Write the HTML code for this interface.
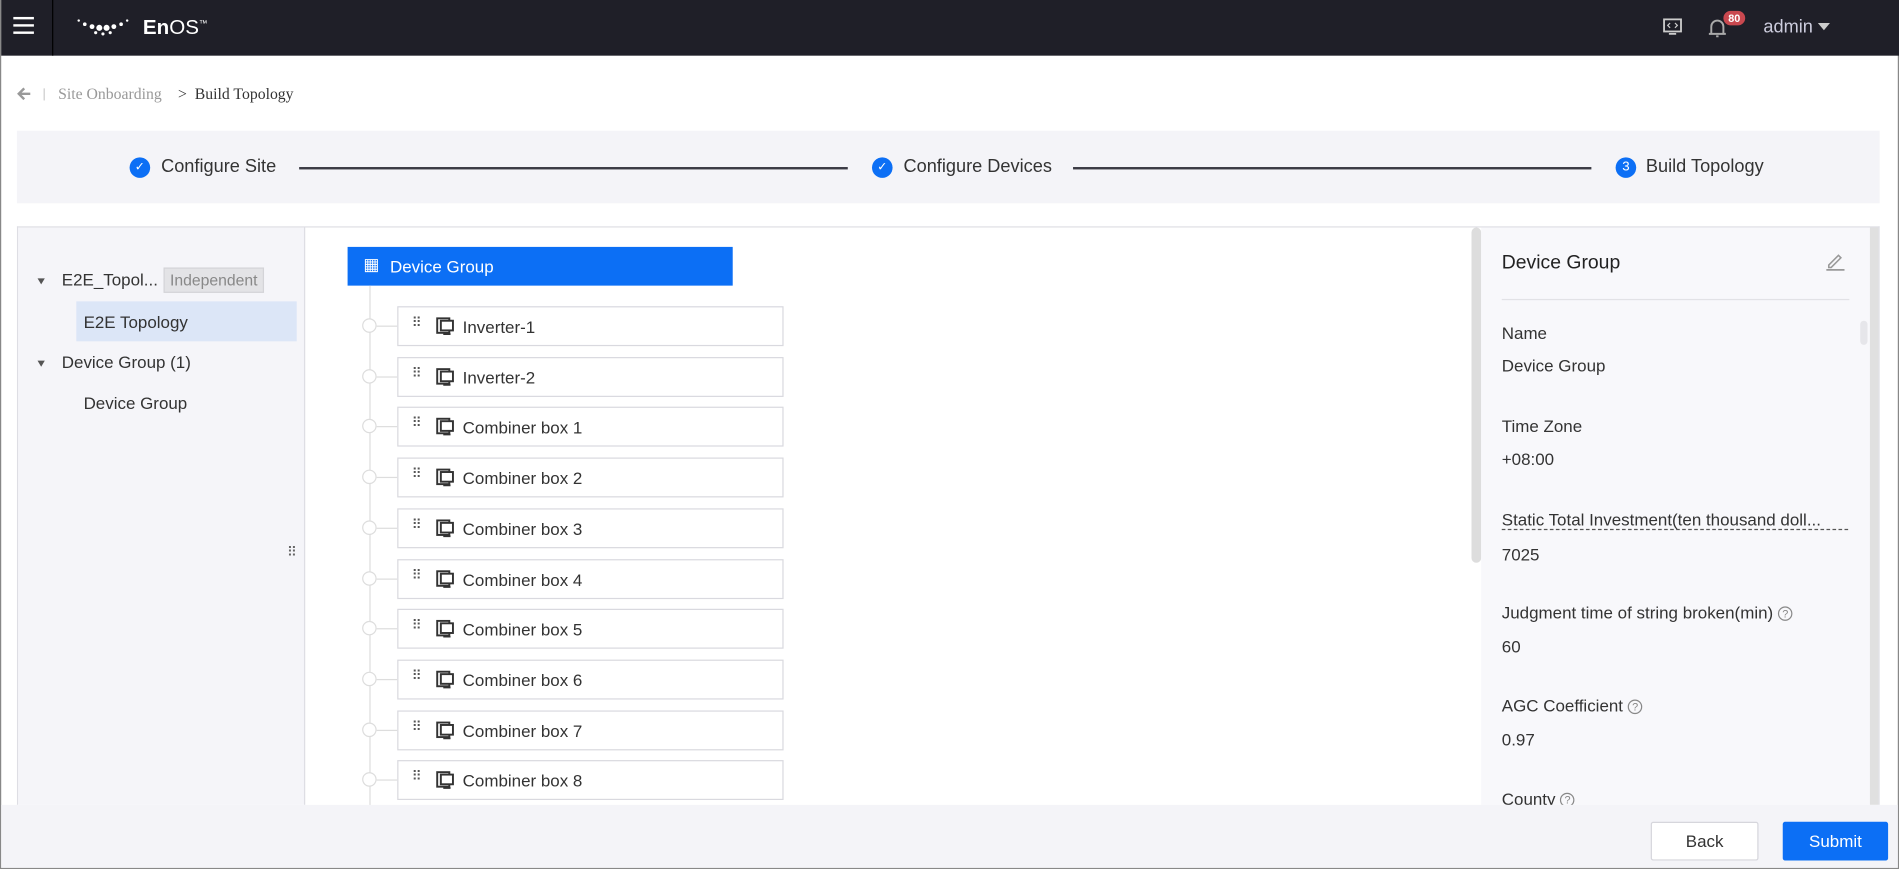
<!DOCTYPE html>
<html><head><meta charset="utf-8"><style>
*{box-sizing:border-box;margin:0;padding:0}
html,body{width:1899px;height:869px;overflow:hidden;background:#fff}
#w{position:absolute;left:0;top:0;width:1568px;height:718px;transform:scale(1.2111,1.2103);transform-origin:0 0;font-family:"Liberation Sans",sans-serif;color:#333;border-left:1px solid #888;border-right:1px solid #888;border-bottom:1px solid #888}
.a{position:absolute}
.top{left:0;top:0;width:1568px;height:46px;background:#1f1f28}
.t{position:absolute;white-space:nowrap}
.item{position:absolute;left:327px;width:319px;height:33px;border:1px solid #d9d9df;background:#fff;font-size:14px;color:#333}
.dot{position:absolute;left:298px;width:12px;height:12px;border:1px solid #ddd;border-radius:50%;background:#fff}
.hl{position:absolute;left:310px;width:17px;height:1px;background:#ddd}
.lbl{position:absolute;left:1239px;font-size:14px;color:#333}
.q{display:inline-block;width:12px;height:12px;border:1px solid #888;border-radius:50%;font-size:9px;line-height:10px;text-align:center;color:#888;vertical-align:1px;margin-left:4px}
</style></head><body><div id="w">
<div class="a top"></div>
<div class="a" style="left:42px;top:0;width:1px;height:46px;background:#000"></div>
<div class="a" style="left:10px;top:14px;width:17px;height:2px;background:#fff;box-shadow:0 6px 0 #fff,0 12px 0 #fff"></div>
<svg class="a" style="left:62px;top:14px" width="50" height="20"><g fill="#fff"><circle cx="2" cy="3" r="1"/><circle cx="7" cy="6" r="1.5"/><circle cx="13" cy="8" r="2"/><circle cx="19" cy="9" r="2.5"/><circle cx="25" cy="9" r="2.5"/><circle cx="31" cy="8" r="2"/><circle cx="37" cy="6" r="1.5"/><circle cx="42" cy="3" r="1"/><circle cx="16" cy="13" r="1.3"/><circle cx="22" cy="14" r="1.3"/><circle cx="28" cy="13" r="1.3"/></g></svg>
<div class="t" style="left:117px;top:13px;color:#fff;font-size:17px"><b>En</b>OS<sup style="font-size:7px">™</sup></div>
<svg class="a" style="left:1372px;top:15px" width="16" height="15"><rect x="1" y="1" width="14" height="10" fill="none" stroke="#ccc" stroke-width="1.5"/><path d="M5 13h6" stroke="#ccc" stroke-width="1.5"/><path d="M6 4l-2 2 2 2M10 4l2 2-2 2" stroke="#ccc" fill="none"/></svg>
<svg class="a" style="left:1408px;top:13px" width="18" height="20"><path d="M4 15V9a5 5 0 0110 0v6M2 15h14M8 17h2" stroke="#aaa" stroke-width="1.6" fill="none"/></svg>
<div class="t" style="left:1422px;top:9px;background:#c9484f;color:#fff;font-size:9px;font-weight:bold;border-radius:8px;padding:1px 4px">80</div>
<div class="t" style="left:1455px;top:14px;color:#ccd;font-size:15px">admin</div>
<div class="a" style="left:1500px;top:19px;border:5px solid transparent;border-top:6px solid #ccc"></div>
<svg class="a" style="left:13px;top:72px" width="12" height="11"><path d="M11 5.5H2M6 1L1.5 5.5 6 10" stroke="#999" stroke-width="2" fill="none"/></svg>
<div class="a" style="left:35px;top:73px;width:1px;height:10px;background:#ccc"></div>
<div class="t" style="left:47px;top:70px;font-family:'Liberation Serif',serif;font-size:13px;color:#999">Site Onboarding</div>
<div class="t" style="left:146px;top:70px;font-family:'Liberation Serif',serif;font-size:13px;color:#333">&gt;&nbsp;&nbsp;Build Topology</div>
<div class="a" style="left:13px;top:108px;width:1538px;height:60px;background:#f4f4f8"></div>
<div class="a" style="left:106px;top:130px;width:17px;height:17px;border-radius:50%;background:#0c6ff5;color:#fff;font-size:10px;text-align:center;line-height:17px">✓</div>
<div class="t" style="left:132px;top:129px;font-size:15px">Configure Site</div>
<div class="a" style="left:246px;top:138px;width:453px;height:2px;background:#3a3a44"></div>
<div class="a" style="left:719px;top:130px;width:17px;height:17px;border-radius:50%;background:#0c6ff5;color:#fff;font-size:10px;text-align:center;line-height:17px">✓</div>
<div class="t" style="left:745px;top:129px;font-size:15px">Configure Devices</div>
<div class="a" style="left:885px;top:138px;width:428px;height:2px;background:#3a3a44"></div>
<div class="a" style="left:1333px;top:130px;width:17px;height:17px;border-radius:50%;background:#0c6ff5;color:#fff;font-size:11px;text-align:center;line-height:17px">3</div>
<div class="t" style="left:1358px;top:129px;font-size:15px">Build Topology</div>
<div class="a" style="left:13px;top:187px;width:1538px;height:478px;border:1px solid #dedee4;border-bottom:0"></div>
<div class="a" style="left:14px;top:188px;width:237px;height:477px;background:#f5f5f9;border-right:1px solid #dedee4"></div>
<div class="a" style="left:30px;top:230px;border:3px solid transparent;border-top:5px solid #555"></div>
<div class="t" style="left:50px;top:223px;font-size:14px">E2E_Topol...</div>
<div class="t" style="left:134px;top:221px;width:83px;height:21px;background:#e3e3e6;border:1px solid #d4d4d8;color:#888;font-size:13px;text-align:center;line-height:19px">Independent</div>
<div class="a" style="left:62px;top:249px;width:182px;height:33px;background:#dce6f7"></div>
<div class="t" style="left:68px;top:258px;font-size:14px">E2E Topology</div>
<div class="a" style="left:30px;top:298px;border:3px solid transparent;border-top:5px solid #555"></div>
<div class="t" style="left:50px;top:291px;font-size:14px">Device Group (1)</div>
<div class="t" style="left:68px;top:325px;font-size:14px">Device Group</div>
<div class="t" style="left:236px;top:450px;font-size:11px;color:#666">⠿</div>
<div class="a" style="left:286px;top:204px;width:318px;height:32px;background:#0c6ff5"></div>
<div class="t" style="left:299px;top:210px;color:#fff;font-size:14px">▦</div>
<div class="t" style="left:321px;top:212px;color:#fff;font-size:14px">Device Group</div>
<div class="a" style="left:304px;top:236px;width:1px;height:430px;background:#ddd"></div>
<div id="items"></div>
<div class="a" style="left:1214px;top:188px;width:8px;height:277px;background:#ddd;border-radius:4px"></div>
<div class="a" style="left:1222px;top:188px;width:328px;height:477px;background:#f8f8fb"></div>
<div class="a" style="left:1543px;top:188px;width:7px;height:477px;background:#e0e0e0"></div>
<div class="a" style="left:1535px;top:265px;width:6px;height:20px;background:#e6e6ea;border-radius:3px"></div>
<div class="t" style="left:1239px;top:209px;font-size:16px;color:#222">Device Group</div>
<svg class="a" style="left:1505px;top:208px" width="18" height="16"><path d="M4 11L12 3l2 2-8 8H4z" fill="none" stroke="#999" stroke-width="1.3"/><path d="M2 15h15" stroke="#999" stroke-width="1.5"/></svg>
<div class="a" style="left:1239px;top:247px;width:287px;height:1px;background:#e2e2e6"></div>
<div class="lbl" style="top:267px">Name</div>
<div class="lbl" style="top:294px">Device Group</div>
<div class="lbl" style="top:344px">Time Zone</div>
<div class="lbl" style="top:371px">+08:00</div>
<div class="lbl" style="top:421px;border-bottom:1px dashed #555;width:286px">Static Total Investment(ten thousand doll...</div>
<div class="lbl" style="top:450px">7025</div>
<div class="lbl" style="top:498px">Judgment time of string broken(min)<span class="q">?</span></div>
<div class="lbl" style="top:526px">60</div>
<div class="lbl" style="top:575px">AGC Coefficient<span class="q">?</span></div>
<div class="lbl" style="top:603px">0.97</div>
<div class="lbl" style="top:652px">County<span class="q">?</span></div>
<div class="a" style="left:0;top:665px;width:1566px;height:52px;background:#f4f4f8"></div>
<div class="t" style="left:1362px;top:679px;width:89px;height:32px;background:#fff;border:1px solid #d6d6dc;border-radius:2px;text-align:center;line-height:30px;font-size:14px">Back</div>
<div class="t" style="left:1471px;top:679px;width:87px;height:32px;background:#0c6ff5;border-radius:2px;text-align:center;line-height:32px;font-size:14px;color:#fff">Submit</div>
<script>
var n=["Inverter-1","Inverter-2","Combiner box 1","Combiner box 2","Combiner box 3","Combiner box 4","Combiner box 5","Combiner box 6","Combiner box 7","Combiner box 8"],h="";
n.forEach(function(s,i){var y=Math.round(253+i*41.7);
h+='<div class="hl" style="top:'+(y+16)+'px"></div><div class="dot" style="top:'+(y+10)+'px"></div><div class="item" style="top:'+y+'px"><span class="t" style="left:11px;top:6px;font-size:11px;color:#555">⠿</span><svg class="a" style="left:31px;top:8px" width="16" height="16"><rect x="1" y="1" width="10" height="12" fill="none" stroke="#333" stroke-width="1.6"/><rect x="4" y="3" width="10" height="8" fill="#fff" stroke="#333" stroke-width="1.6"/><path d="M6 14h6" stroke="#333" stroke-width="1.5"/></svg><span class="t" style="left:53px;top:8px">'+s+'</span></div>';});
document.getElementById("items").innerHTML=h;
</script>
</div></body></html>
